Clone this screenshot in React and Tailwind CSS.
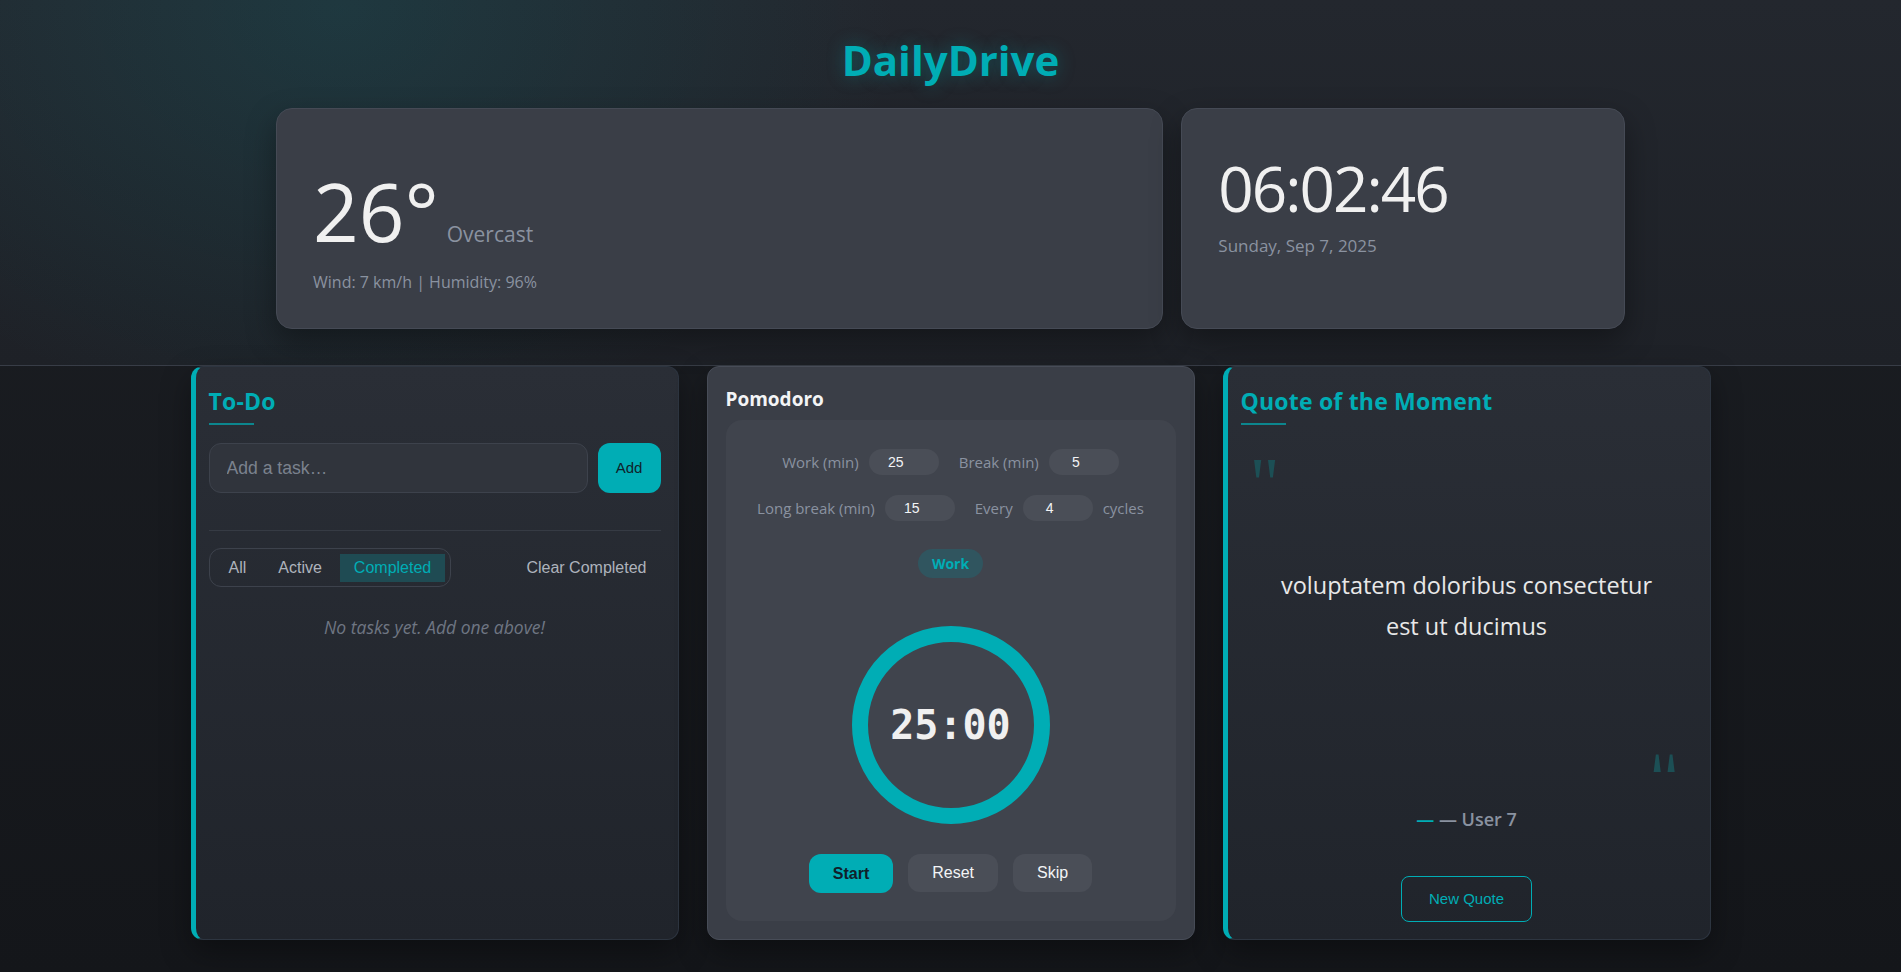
import React, { useState } from 'react';

const ARIAL = "[font-family:'Liberation_Sans',Arial,sans-serif]";

const WeatherCard = () => (
  <div className="h-[221px] rounded-2xl border border-[#454a55] bg-[#3a3e47] px-9 pt-[62px] shadow-[0_12px_30px_rgba(0,0,0,0.35)]">
    <div className="flex items-baseline">
      <span className="text-[80px] font-medium leading-none text-[#f0f0f0]">26°</span>
      <span className="ml-2 text-[21px] text-[#8a92a0]">Overcast</span>
    </div>
    <div className="mt-[19px] text-[16px] leading-6 text-[#8a92a0]">Wind: 7 km/h | Humidity: 96%</div>
  </div>
);

const ClockCard = () => (
  <div className="h-[221px] rounded-2xl border border-[#454a55] bg-[#3a3e47] px-9 pt-[48px] shadow-[0_12px_30px_rgba(0,0,0,0.35)]">
    <div className="text-[62px] leading-none tracking-[-2px] text-[#f0f0f0]">06:02:46</div>
    <div className="mt-[14px] text-[17px] leading-[25px] text-[#8a92a0]">Sunday, Sep 7, 2025</div>
  </div>
);

const CardTitle = ({ children }) => (
  <>
    <h2 className="text-[23px] font-bold leading-none tracking-[0.2px] text-[#00adb5]">{children}</h2>
    <div className="mt-[10px] h-0.5 w-[45px] bg-[#00adb5]/70" />
  </>
);

const TodoCard = () => {
  const [filter, setFilter] = useState('Completed');
  return (
    <section className="flex h-[574px] flex-col rounded-xl border border-[#2d3540] border-l-[5px] border-l-[#00adb5] bg-gradient-to-b from-[#2a2e36] to-[#20242b] pl-[13px] pr-[17px] pt-[23px] shadow-[0_12px_30px_rgba(0,0,0,0.35)]">
      <CardTitle>To-Do</CardTitle>
      <div className="mt-[18px] flex gap-2.5">
        <input
          placeholder="Add a task…"
          className={`${ARIAL} h-[50px] min-w-0 flex-1 rounded-xl border border-[#3d424c] bg-[#30343c] pl-[17px] text-[17.6px] text-[#e5e7eb] outline-none placeholder:text-[#7b828e]`}
        />
        <button className={`${ARIAL} h-[50px] w-[63px] rounded-xl bg-[#00adb5] text-[15px] text-[#10222b]`}>Add</button>
      </div>
      <div className="mt-[37px] h-px bg-[#363b44]" />
      <div className="mt-[17px] flex items-center justify-between">
        <div className="flex gap-1 rounded-xl border border-[#3d424c] px-[5px] pb-1 pt-[5px]">
          {['All', 'Active', 'Completed'].map((f) => (
            <button
              key={f}
              onClick={() => setFilter(f)}
              className={`${ARIAL} h-7 px-3.5 text-[16px] ${filter === f ? 'bg-[#1f4b53] text-[#00adb5]' : 'text-[#aeb3bc]'}`}
            >
              {f}
            </button>
          ))}
        </div>
        <button className={`${ARIAL} h-7 px-3.5 text-[16px] text-[#aeb3bc]`}>Clear Completed</button>
      </div>
      <p className="mt-7 text-center text-[17.5px] italic leading-6 text-[#6f7683]">No tasks yet. Add one above!</p>
    </section>
  );
};

const NumInput = ({ value }) => (
  <div className={`${ARIAL} flex h-[26px] w-[70px] items-center justify-center rounded-full bg-[#4a4e57] pr-4 text-[14px] text-[#f3f4f6]`}>
    {value}
  </div>
);

const PomodoroCard = () => (
  <section className="flex h-[574px] flex-col rounded-xl border border-[#474c57] bg-[#3a3e47] px-[18px] pb-[18px] pt-[23px] shadow-[0_12px_30px_rgba(0,0,0,0.35)]">
    <h2 className="text-[19px] font-bold leading-none text-[#f3f4f6]">Pomodoro</h2>
    <div className="mt-[11px] flex flex-1 flex-col items-center rounded-2xl bg-[#40444d] pt-[29px]">
      <div className="flex h-[26px] items-center gap-5 text-[15px] text-[#8a92a0]">
        <label className="flex items-center gap-2.5">Work (min) <NumInput value="25" /></label>
        <label className="flex items-center gap-2.5">Break (min) <NumInput value="5" /></label>
      </div>
      <div className="mt-5 flex h-[26px] items-center gap-5 text-[15px] text-[#8a92a0]">
        <label className="flex items-center gap-2.5">Long break (min) <NumInput value="15" /></label>
        <label className="flex items-center gap-2.5">Every <NumInput value="4" /> cycles</label>
      </div>
      <div className="mt-7 flex h-[29px] items-center rounded-full bg-[#30555f] px-3.5 text-[14px] font-bold text-[#00adb5]">Work</div>
      <div className="mt-12 flex h-[198px] w-[198px] items-center justify-center rounded-full border-[16px] border-[#00adb5]">
        <span className="[font-family:'DejaVu_Sans_Mono',monospace] text-[40px] font-bold leading-none text-[#f0f0f0]">25:00</span>
      </div>
      <div className="mt-[30px] flex gap-[15px]">
        <button className={`${ARIAL} h-[39px] rounded-xl bg-[#00adb5] px-6 text-[16px] font-bold text-[#10202a]`}>Start</button>
        <button className={`${ARIAL} h-[38px] rounded-xl bg-[#4a4e57] px-6 text-[16px] text-[#f3f4f6]`}>Reset</button>
        <button className={`${ARIAL} h-[38px] rounded-xl bg-[#4a4e57] px-6 text-[16px] text-[#f3f4f6]`}>Skip</button>
      </div>
    </div>
  </section>
);

const QuoteCard = () => (
  <section className="flex h-[574px] flex-col rounded-xl border border-[#2d3540] border-l-[5px] border-l-[#00adb5] bg-gradient-to-b from-[#2a2e36] to-[#20242b] pl-[13px] pr-[17px] pt-[23px] shadow-[0_12px_30px_rgba(0,0,0,0.35)]">
    <CardTitle>Quote of the Moment</CardTitle>
    <div className="relative mt-px flex h-[360px] items-center justify-center">
      <span className="absolute left-[9px] top-[21px] [font-family:'Liberation_Serif',serif] text-[74px] leading-none text-[#1c4f55]">"</span>
      <p className="max-w-[400px] text-center text-[23.5px] leading-[41px] text-[#e8e8e8]">
        voluptatem doloribus consectetur est ut ducimus
      </p>
      <span className="absolute bottom-px right-[13px] rotate-180 [font-family:'Liberation_Serif',serif] text-[74px] leading-none text-[#1c4f55]">"</span>
    </div>
    <p className="mt-5 text-center text-[18px] font-semibold leading-[27px] text-[#8a92a0]">
      <span className="text-[#00adb5]">—</span> — User 7
    </p>
    <button className={`${ARIAL} mx-auto mt-[43px] h-[46px] rounded-lg border border-[#00adb5] px-[27px] text-[15px] text-[#00adb5]`}>
      New Quote
    </button>
  </section>
);

export default function App() {
  return (
    <div className="min-h-screen [font-family:'Open_Sans',sans-serif] [background:linear-gradient(to_bottom,#1c1f24,#14161a)]">
      <header className="border-b border-[#383d47] pb-9 pt-[39px] [background:radial-gradient(ellipse_560px_420px_at_340px_10px,rgba(0,173,181,0.13),transparent),linear-gradient(to_bottom,#23272e,#1e2127)]">
        <h1 className="text-center text-[42px] font-bold leading-none text-[#00adb5] [text-shadow:0_0_18px_rgba(0,173,181,0.35)]">
          DailyDrive
        </h1>
        <div className="mx-auto mt-[27px] grid w-[1349px] grid-cols-[2fr_1fr] gap-[18px]">
          <WeatherCard />
          <ClockCard />
        </div>
      </header>
      <main className="mx-auto grid w-[1520px] grid-cols-3 gap-7 pb-8">
        <TodoCard />
        <PomodoroCard />
        <QuoteCard />
      </main>
    </div>
  );
}
